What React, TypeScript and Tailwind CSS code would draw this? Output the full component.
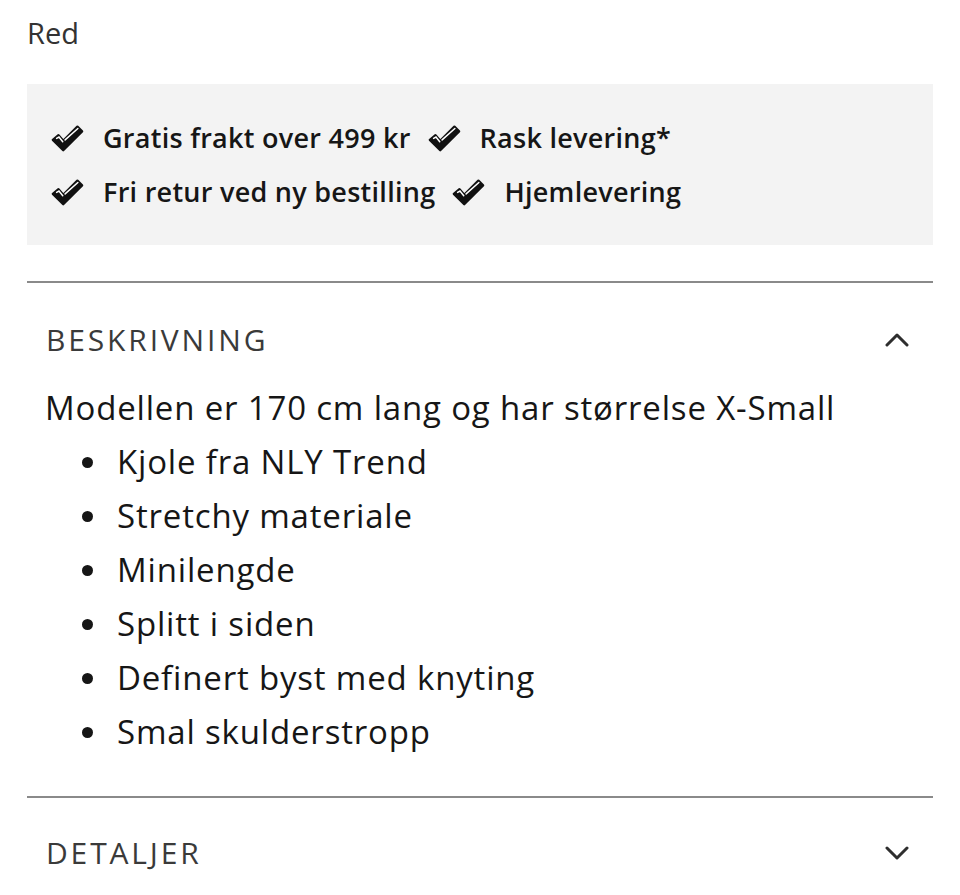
import React from 'react';

function CheckIcon() {
  return (
    <svg width="34" height="30" viewBox="0 0 36 30" className="shrink-0">
      <path
        d="M3 17 L9 12 L14 18 L29 3 L34 8 L14 28 Z"
        fill="#111"
        stroke="#111"
        strokeWidth="2.5"
        strokeLinejoin="round"
      />
      <path d="M7 15.5 L9.5 14 L13.5 19" fill="none" stroke="#fff" strokeWidth="1.6" strokeLinecap="round" />
      <path d="M16 17 L29.5 5" fill="none" stroke="#fff" strokeWidth="1.6" strokeLinecap="round" />
    </svg>
  );
}

function Chevron({ up }: { up?: boolean }) {
  return (
    <svg width="24" height="16" viewBox="0 0 24 16" className="mr-[24px]">
      <path
        d={up ? 'M2 13 L12 3 L22 13' : 'M2 3 L12 13 L22 3'}
        fill="none"
        stroke="#2e2e2e"
        strokeWidth="3"
        strokeLinecap="round"
        strokeLinejoin="round"
      />
    </svg>
  );
}

export default function App() {
  const perks = ['Gratis frakt over 499 kr', 'Rask levering*', 'Fri retur ved ny bestilling', 'Hjemlevering'];
  const bullets = [
    'Kjole fra NLY Trend',
    'Stretchy materiale',
    'Minilengde',
    'Splitt i siden',
    'Definert byst med knyting',
    'Smal skulderstropp',
  ];

  return (
    <div className="bg-white min-h-[895px] px-[27px] text-[#161616]" style={{ fontFamily: '"Open Sans", Lato, sans-serif' }}>
      <div className="pt-[15px] text-[29px] leading-[36px] text-[#333]">Red</div>

      <div className="mt-[33px] bg-[#f3f3f3] pl-[23px] pr-4 pt-[27px] pb-[26px]">
        <div className="flex flex-wrap max-w-[680px]">
          {perks.map((p) => (
            <div key={p} className="flex items-center gap-[19px] h-[54px] mr-[16px]">
              <CheckIcon />
              <span className="text-[27px] tracking-[0.01em] font-semibold text-[#161616]">{p}</span>
            </div>
          ))}
        </div>
      </div>

      <div className="mt-[36px] border-t-2 border-[#8a8a8a]">
        <div className="flex items-center justify-between pl-[19px] pt-[39px] pb-[23px]">
          <span className="text-[30px] leading-[36px] font-medium tracking-[0.095em] text-[#3a3a3a]">BESKRIVNING</span>
          <Chevron up />
        </div>
        <div className="pl-[18px] pb-[37px] text-[33px] tracking-[0.025em] leading-[54px]">
          <p>Modellen er 170 cm lang og har størrelse X-Small</p>
          <ul>
            {bullets.map((b) => (
              <li key={b} className="flex items-center">
                <span className="w-[11px] h-[11px] rounded-full bg-[#161616] ml-[37px] mr-[24px]" />
                {b}
              </li>
            ))}
          </ul>
        </div>
      </div>

      <div className="border-t-2 border-[#8a8a8a]">
        <div className="flex items-center justify-between pl-[19px] pt-[37px] pb-[23px]">
          <span className="text-[30px] leading-[36px] font-medium tracking-[0.095em] text-[#3a3a3a]">DETALJER</span>
          <Chevron />
        </div>
      </div>
    </div>
  );
}
